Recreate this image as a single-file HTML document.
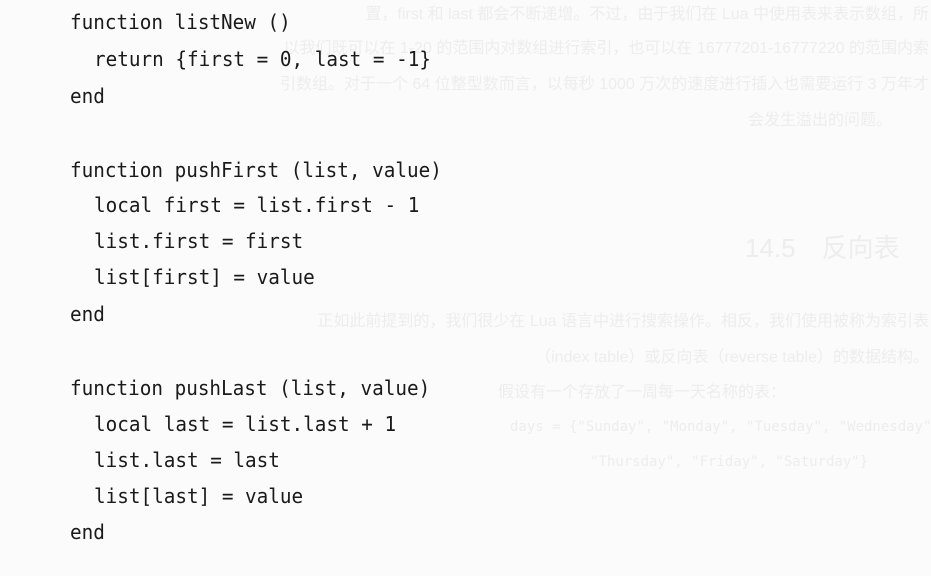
<!DOCTYPE html>
<html><head><meta charset="utf-8"><style>
html,body{margin:0;padding:0;}
body{width:931px;height:576px;background:#fbfbfb;position:relative;overflow:hidden;}
.bg{position:absolute;right:2px;color:#ededed;font-family:"Liberation Sans","Noto Sans CJK SC",sans-serif;font-size:16px;white-space:nowrap;}
.c{position:absolute;font-family:"DejaVu Sans Mono","Liberation Mono",monospace;font-size:20px;color:#1a1a1a;white-space:pre;transform:scaleX(0.965);transform-origin:0 50%;line-height:24px;}
</style></head><body>
<div class="bg" style="top:0px">置，first 和 last 都会不断递增。不过，由于我们在 Lua 中使用表来表示数组，所</div>
<div class="bg" style="top:34px">以我们既可以在 1-20 的范围内对数组进行索引，也可以在 16777201-16777220 的范围内索</div>
<div class="bg" style="top:70px">引数组。对于一个 64 位整型数而言，以每秒 1000 万次的速度进行插入也需要运行 3 万年才</div>
<div class="bg" style="left:748px;right:auto;top:106px">会发生溢出的问题。</div>
<div class="bg" style="left:745px;right:auto;top:228px;font-size:26px">14.5　反向表</div>
<div class="bg" style="top:307px">正如此前提到的，我们很少在 Lua 语言中进行搜索操作。相反，我们使用被称为索引表</div>
<div class="bg" style="top:343px">（index table）或反向表（reverse table）的数据结构。</div>
<div class="bg" style="left:498px;right:auto;top:378px">假设有一个存放了一周每一天名称的表：</div>
<div class="bg" style="left:510px;right:auto;top:419px;font-family:'DejaVu Sans Mono',monospace;font-size:14px">days = {"Sunday", "Monday", "Tuesday", "Wednesday",</div>
<div class="bg" style="left:590px;right:auto;top:454px;font-family:'DejaVu Sans Mono',monospace;font-size:14px">"Thursday", "Friday", "Saturday"}</div>

<div class="c" style="left:70px;top:10px">function listNew ()</div>
<div class="c" style="left:94px;top:47px">return {first = 0, last = -1}</div>
<div class="c" style="left:70px;top:84px">end</div>
<div class="c" style="left:70px;top:158px">function pushFirst (list, value)</div>
<div class="c" style="left:94px;top:193px">local first = list.first - 1</div>
<div class="c" style="left:94px;top:229px">list.first = first</div>
<div class="c" style="left:94px;top:265px">list[first] = value</div>
<div class="c" style="left:70px;top:302px">end</div>
<div class="c" style="left:70px;top:376px">function pushLast (list, value)</div>
<div class="c" style="left:94px;top:412px">local last = list.last + 1</div>
<div class="c" style="left:94px;top:448px">list.last = last</div>
<div class="c" style="left:94px;top:484px">list[last] = value</div>
<div class="c" style="left:70px;top:520px">end</div>
</body></html>
